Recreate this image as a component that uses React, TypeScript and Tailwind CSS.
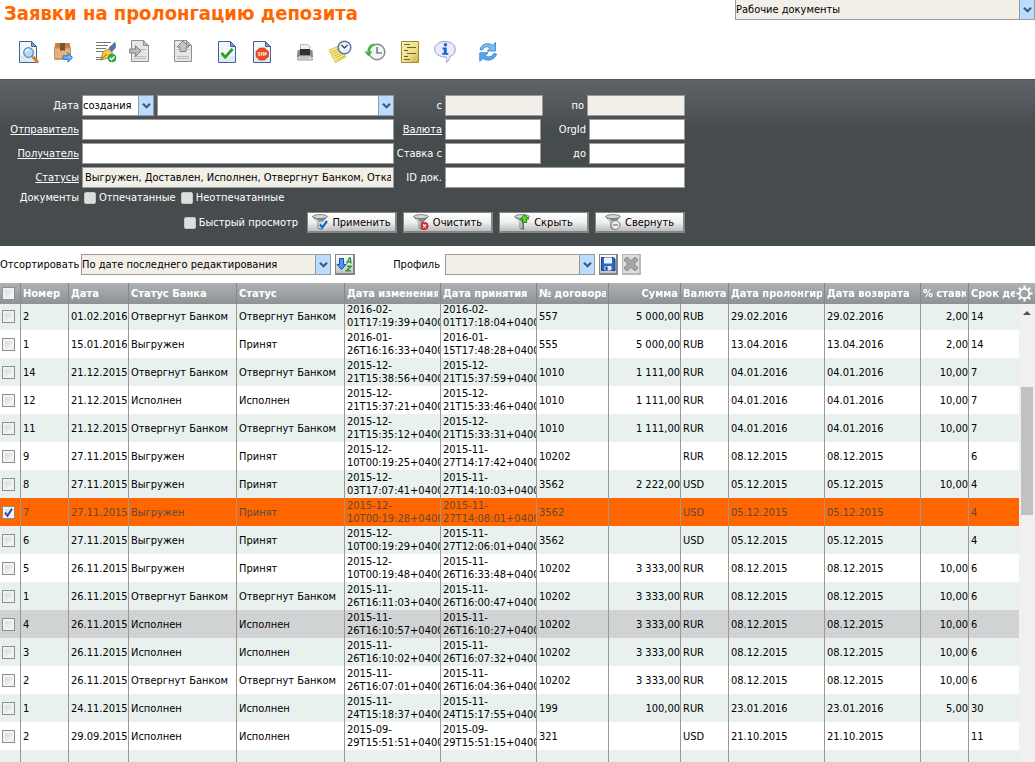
import { useLayoutEffect, useRef, type ReactNode } from "react";

type Row = {
  num: string; date: string; bank: string; status: string;
  changed: [string, string]; accepted: [string, string];
  contract: string; sum: string; cur: string;
  prolong: string; back: string; rate: string; term: string;
  state?: "selected" | "hover";
};

const R = (
  num: string, date: string, bank: string, status: string,
  c1: string, c2: string, a1: string, a2: string,
  contract: string, sum: string, cur: string,
  prolong: string, back: string, rate: string, term: string,
  state?: "selected" | "hover",
): Row => ({
  num, date, bank, status,
  changed: [c1 + "-", c2 + "+0400"], accepted: [a1 + "-", a2 + "+0400"],
  contract, sum, cur, prolong, back, rate, term, state,
});

const OB = "Отвергнут Банком";
const V = "Выгружен";
const P = "Принят";
const I = "Исполнен";

const rows: Row[] = [
  R("2", "01.02.2016", OB, OB, "2016-02", "01T17:19:39", "2016-02", "01T17:18:04", "557", "5 000,00", "RUB", "29.02.2016", "29.02.2016", "2,00", "14"),
  R("1", "15.01.2016", V, P, "2016-01", "26T16:16:33", "2016-01", "15T17:48:28", "555", "5 000,00", "RUB", "13.04.2016", "13.04.2016", "2,00", "14"),
  R("14", "21.12.2015", OB, OB, "2015-12", "21T15:38:56", "2015-12", "21T15:37:59", "1010", "1 111,00", "RUR", "04.01.2016", "04.01.2016", "10,00", "7"),
  R("12", "21.12.2015", I, I, "2015-12", "21T15:37:21", "2015-12", "21T15:33:46", "1010", "1 111,00", "RUR", "04.01.2016", "04.01.2016", "10,00", "7"),
  R("11", "21.12.2015", OB, OB, "2015-12", "21T15:35:12", "2015-12", "21T15:33:31", "1010", "1 111,00", "RUR", "04.01.2016", "04.01.2016", "10,00", "7"),
  R("9", "27.11.2015", V, P, "2015-12", "10T00:19:25", "2015-11", "27T14:17:42", "10202", "", "RUR", "08.12.2015", "08.12.2015", "", "6"),
  R("8", "27.11.2015", V, P, "2015-12", "03T17:07:41", "2015-11", "27T14:10:03", "3562", "2 222,00", "USD", "05.12.2015", "05.12.2015", "10,00", "4"),
  R("7", "27.11.2015", V, P, "2015-12", "10T00:19:28", "2015-11", "27T14:08:01", "3562", "", "USD", "05.12.2015", "05.12.2015", "", "4", "selected"),
  R("6", "27.11.2015", V, P, "2015-12", "10T00:19:29", "2015-11", "27T12:06:01", "3562", "", "USD", "05.12.2015", "05.12.2015", "", "4"),
  R("5", "26.11.2015", V, P, "2015-12", "10T00:19:48", "2015-11", "26T16:33:48", "10202", "3 333,00", "RUR", "08.12.2015", "08.12.2015", "10,00", "6"),
  R("1", "26.11.2015", OB, OB, "2015-11", "26T16:11:03", "2015-11", "26T16:00:47", "10202", "3 333,00", "RUR", "08.12.2015", "08.12.2015", "10,00", "6"),
  R("4", "26.11.2015", I, I, "2015-11", "26T16:10:57", "2015-11", "26T16:10:27", "10202", "3 333,00", "RUR", "08.12.2015", "08.12.2015", "10,00", "6", "hover"),
  R("3", "26.11.2015", I, I, "2015-11", "26T16:10:02", "2015-11", "26T16:07:32", "10202", "3 333,00", "RUR", "08.12.2015", "08.12.2015", "10,00", "6"),
  R("2", "26.11.2015", OB, OB, "2015-11", "26T16:07:01", "2015-11", "26T16:04:36", "10202", "3 333,00", "RUR", "08.12.2015", "08.12.2015", "10,00", "6"),
  R("1", "24.11.2015", I, I, "2015-11", "24T15:18:37", "2015-11", "24T15:17:55", "199", "100,00", "RUR", "23.01.2016", "23.01.2016", "5,00", "30"),
  R("2", "29.09.2015", I, I, "2015-09", "29T15:51:51", "2015-09", "29T15:51:15", "321", "", "USD", "21.10.2015", "21.10.2015", "", "11"),
];

const columns: { title: string; width: string; right?: boolean }[] = [
  { title: "Номер", width: "w-[48px]" },
  { title: "Дата", width: "w-[60px]" },
  { title: "Статус Банка", width: "w-[108px]" },
  { title: "Статус", width: "w-[108px]" },
  { title: "Дата изменения", width: "w-[96px]" },
  { title: "Дата принятия", width: "w-[96px]" },
  { title: "№ договора", width: "w-[72px]" },
  { title: "Сумма", width: "w-[72px]", right: true },
  { title: "Валюта", width: "w-[48px]" },
  { title: "Дата пролонгирования", width: "w-[96px]" },
  { title: "Дата возврата", width: "w-[96px]" },
  { title: "% ставка", width: "w-[48px]" },
  { title: "Срок депозита", width: "" },
];

/* ---------- toolbar icons ---------- */

const Svg = ({ children }: { children: ReactNode }) => (
  <svg width="24" height="24" viewBox="0 0 24 24" fill="none" aria-hidden="true">{children}</svg>
);

const Sheet = () => (
  <>
    <path d="M3.5 1.5h12l5 5v16h-17z" fill="#f1f6fc" stroke="#44618f" />
    <path d="M4.500 16h15.500v6H4.500z" fill="#dbe8f6" />
    <path d="M15.500 1.500v5h5z" fill="#7f9fd0" stroke="#44618f" />
  </>
);
const GraySheet = ({ x = 0 }: { x?: number }) => (
  <g transform={`translate(${x} 0)`}>
    <path d="M3.500.500h12l5 5v16h-17z" fill="#e6e6e6" stroke="#8f8f8f" />
    <path d="M15.500.500v5h5z" fill="#bdbdbd" stroke="#8f8f8f" />
    <path d="M6 9.500h12M6 16.500h12M6 18.500h12" stroke="#bbb" />
  </g>
);

const ViewIcon = () => (
  <Svg>
    <Sheet />
    <path d="m17 17 4.300 4.500" stroke="#e07a2c" strokeWidth="3.200" strokeLinecap="round" />
    <path d="m15.500 15.500 2 2" stroke="#9aa" strokeWidth="2" />
    <circle cx="12.500" cy="12.500" r="4.800" fill="#a9e0fb" stroke="#6e86a8" strokeWidth="1.300" />
    <path d="M9.800 12a3 3 0 0 1 3-2.500" stroke="#fff" strokeWidth="1.300" />
  </Svg>
);
const BoxIcon = () => (
  <Svg>
    <path d="M4.500 3h14l1 5v12h-16V8z" fill="#d9a066" />
    <path d="M4.500 3h14l1 5h-16z" fill="#c08347" />
    <path d="M3.500 8h16v10.500h-16z" fill="#e2b17d" stroke="#c59262" />
    <path d="M9 3h5v8l-1.500-1-1 1-1-1-1.500 1z" fill="#7d5230" />
    <path d="M12 15.800h5v-3l4.500 4.700-4.500 4.700v-3h-5z" fill="#6db6f2" stroke="#2d73bd" />
  </Svg>
);
const SignIcon = () => (
  <Svg>
    <path d="M2 2.500h15M2 5.500h12M2 8.500h10M2 11.500h7M2 17.500h5M2 19.500h5" stroke="#777" />
    <path d="M15 8 21 2.500l.500 5-4 4.500z" fill="#4e74bd" stroke="#2f4f90" strokeWidth=".7" />
    <path d="m14 9 4.500 3.500-2.500 5L6.500 20 9 12z" fill="#f1cf52" stroke="#a67d1e" strokeWidth=".9" />
    <path d="m7 19.500 6-5.500" stroke="#7a5a12" strokeWidth=".9" />
    <circle cx="18" cy="18" r="4" fill="#38ad45" stroke="#1e8a34" strokeWidth=".6" />
    <path d="m15.800 18 1.700 1.700 3-3.200" stroke="#fff" strokeWidth="1.400" />
  </Svg>
);
const ImportIcon = () => (
  <Svg>
    <GraySheet x={-1} />
    <path d="M.6 9h5.900V5.500l5.500 5.500-5.500 5.500V13H.6z" fill="#b9b9b9" stroke="#808080" />
  </Svg>
);
const ExportIcon = () => (
  <Svg>
    <GraySheet x={-1} />
    <path d="M8 11.500V7H5l6-6 6 6h-3v4.500z" fill="#c4c4c4" stroke="#808080" />
  </Svg>
);
const CheckDocIcon = () => (
  <Svg>
    <Sheet />
    <path d="m6.500 13 3.700 4.200L17.500 9" stroke="#2f9e1f" strokeWidth="2.700" />
  </Svg>
);
const StopDocIcon = () => (
  <Svg>
    <Sheet />
    <path d="M9.500 8h5l4 3.600v5L14.500 20h-5L6 16.600v-5z" fill="#ec4a20" stroke="#c93a16" strokeWidth=".7" />
    <path d="M8.300 12.700h1.600M8.300 12.700v1.400h1.600v1.500H8.300M10.500 12.700h1.800M11.400 12.700v3M13 12.700h1v2.600h-1zM15 15.700v-3h1.300v1.500H15" stroke="#fff" strokeWidth=".8" />
  </Svg>
);
const PrinterIcon = () => (
  <Svg>
    <path d="M7.500 4.500h7l2.500 2V12h-9.500z" fill="#e6f3f1" stroke="#9ab3b2" strokeWidth=".8" />
    <path d="M4.500 10h15l.500 7H4z" fill="#858a90" />
    <path d="M7 9h10v6H7z" fill="#2d3035" />
    <path d="M5.500 16h13l1 4h-15z" fill="#e4e4e4" stroke="#82878b" strokeWidth=".8" />
    <path d="M7 18h10" stroke="#a5a9ab" />
  </Svg>
);
const ScheduleIcon = () => (
  <Svg>
    <path d="m1 10 10-4 7 11-10.500 5.500z" fill="#faeb8b" stroke="#d3ae2e" strokeWidth=".8" />
    <path d="m3.500 12 7-3M4.700 14l9-4M6 16l9-4M7 18l8.500-4M8.500 20l8-4" stroke="#c3a432" strokeWidth=".8" />
    <circle cx="16.500" cy="7.500" r="6.300" fill="#eaf3fc" stroke="#60789f" strokeWidth="1.500" />
    <path d="m13.500 5 3 3 3-3" stroke="#334" strokeWidth="1.200" />
  </Svg>
);
const HistoryIcon = () => (
  <Svg>
    <circle cx="14" cy="12" r="7.800" fill="#f1f5f2" stroke="#7d8c86" strokeWidth="1.400" />
    <path d="M14 7v6h5" stroke="#555" strokeWidth="1.200" />
    <path d="M11 4.500c-3 .6-5.500 3-5.500 7" stroke="#41b541" strokeWidth="2.200" />
    <path d="M1.500 11.500h8l-4 5z" fill="#41b541" />
  </Svg>
);
const NotesIcon = () => (
  <Svg>
    <defs>
      <linearGradient id="notes" x1="0" y1="0" x2="1" y2="1">
        <stop stopColor="#fbf3b4" /><stop offset=".6" stopColor="#efdc86" /><stop offset="1" stopColor="#c3b04c" />
      </linearGradient>
    </defs>
    <path d="M3.500 1.500h17v21h-17z" fill="url(#notes)" stroke="#a08c30" />
    <path d="M6 4.500h6M9 7.500h9M6 10.500h4M9 13.500h9M6 16.500h4M6 19.500h6" stroke="#6b6430" strokeWidth="1.200" />
  </Svg>
);
const InfoIcon = () => (
  <Svg>
    <path d="M12 1.500c6 0 10.300 3.300 10.300 7.800 0 4-2.500 6.300-5.500 7.200-.2 2.500-1 4.500-3.300 6 .5-2 .2-4-.5-5.500C6 17 1.600 14 1.600 9.300 1.600 4.800 6 1.500 12 1.500z" fill="#e9ebfa" stroke="#9a9fc8" />
    <circle cx="12.500" cy="4.800" r="1.700" fill="#1661cc" />
    <path d="M9.500 7.500h4.200V13h1.500v1.800H9.300V13h1.500V9.200H9.500z" fill="#1661cc" />
  </Svg>
);
const RefreshIcon = () => (
  <Svg>
    <path d="M4 9.500C5.500 4 12 2 16.500 5.300L19.500 2.500v8.500h-8.200l2.700-3C11 6 8 6.500 6.500 10z" fill="#7cbcf4" stroke="#3a86cf" strokeWidth=".9" />
    <path d="M20.500 14C19 19.500 12 22 7 18.500l-3.200 2.800v-8.500H12l-2.700 3c3 2 7 1.200 8.200-2.300z" fill="#5aa6ec" stroke="#3a86cf" strokeWidth=".9" />
  </Svg>
);

const toolbar: { label: string; icon: ReactNode }[][] = [
  [{ label: "Просмотр", icon: <ViewIcon /> }, { label: "Отправить", icon: <BoxIcon /> }],
  [{ label: "Подписать", icon: <SignIcon /> }, { label: "Импорт", icon: <ImportIcon /> }],
  [{ label: "Экспорт", icon: <ExportIcon /> }],
  [{ label: "Принять", icon: <CheckDocIcon /> }, { label: "Отказать", icon: <StopDocIcon /> }],
  [
    { label: "Печать", icon: <PrinterIcon /> },
    { label: "Расписание", icon: <ScheduleIcon /> },
    { label: "История", icon: <HistoryIcon /> },
    { label: "Заметки", icon: <NotesIcon /> },
    { label: "Информация", icon: <InfoIcon /> },
  ],
  [{ label: "Обновить", icon: <RefreshIcon /> }],
];

/* ---------- filter button icons ---------- */

const Funnel = ({ children }: { children?: ReactNode }) => (
  <svg width="16" height="16" viewBox="0 0 16 16" fill="none" aria-hidden="true">
    <path d="M.8 2.500 6 8.500V14l3.500 1.500v-7L15 2.500z" fill="#8c8f92" stroke="#5c5f62" strokeWidth=".8" />
    <path d="M3 4.500 7 8.700V14" stroke="#dcdcdc" strokeWidth="1.200" />
    <ellipse cx="8" cy="2.600" rx="7.200" ry="2" fill="#d5d7d8" stroke="#66696c" strokeWidth=".8" />
    {children}
  </svg>
);
const FunnelApply = () => (
  <Funnel><path d="M7.500 7.500h7v7h-7z" fill="#dbe8fa" opacity=".8" /><path d="m8 10.500 2.500 3L15 7" stroke="#1e62c8" strokeWidth="2.200" /></Funnel>
);
const FunnelClear = () => (
  <Funnel><circle cx="11.500" cy="12" r="3.700" fill="#d8362f" stroke="#a51c1c" strokeWidth=".6" /><path d="m10 10.500 3 3m0-3-3 3" stroke="#fff" strokeWidth="1.200" /></Funnel>
);
const FunnelHide = () => (
  <Funnel><path d="M8.700 8.500V5H6.500l4-4.500 4.500 4.500h-2.300v3.500z" fill="#55d42a" stroke="#1d7a12" strokeWidth=".9" /></Funnel>
);
const FunnelCollapse = () => (
  <Funnel><circle cx="10.500" cy="11" r="4.500" fill="#ededed" stroke="#777" /><path d="M8 11h5" stroke="#777" strokeWidth="1.200" /></Funnel>
);

/* ---------- controls ---------- */

function Combo({ id, label, value, className, bg = "bg-white" }: {
  id: string; label?: string; value: string; className: string; bg?: string;
}) {
  return (
    <div className={`relative h-[21px] shrink-0 ${className}`}>
      <select
        id={id}
        aria-label={label}
        className={`h-full w-full appearance-none border border-[#9a9a9a] pr-4 text-black outline-none ${bg}`}
      >
        <option>{value}</option>
      </select>
      <span className="pointer-events-none absolute inset-y-px right-px flex w-[15px] items-center justify-center border-l border-[#9a9a9a] bg-[#b9dcff]">
        <svg width="9" height="6" viewBox="0 0 9 6" fill="none" aria-hidden="true">
          <path d="m1 .800 3.500 3.400L8 .800" stroke="#41597c" strokeWidth="2.200" />
        </svg>
      </span>
    </div>
  );
}

function Field({ id, value, readOnly, className }: { id: string; value?: string; readOnly?: boolean; className: string }) {
  return (
    <input
      id={id}
      type="text"
      defaultValue={value}
      readOnly={readOnly}
      className={`h-[21px] shrink-0 border border-[#9a9a9a] px-[2px] text-black outline-none ${readOnly ? "bg-[#f2eee8]" : "bg-white"} ${className}`}
    />
  );
}

function Label({ htmlFor, className, link, children }: { htmlFor: string; className: string; link?: boolean; children: string }) {
  return (
    <label htmlFor={htmlFor} className={`shrink-0 whitespace-nowrap text-right ${className}`}>
      {link ? <a href="#pick" className="underline">{children}</a> : children}
    </label>
  );
}

function Tick({ id, children }: { id: string; children: string }) {
  return (
    <label htmlFor={id} className="flex items-center gap-[3px] whitespace-nowrap">
      <input id={id} type="checkbox" className="size-[12px] appearance-none rounded-[2px] border border-[#c4c4c4] bg-[#dedede]" />
      {children}
    </label>
  );
}

function ActionButton({ icon, children }: { icon: ReactNode; children: string }) {
  return (
    <button
      type="button"
      className="flex h-[21px] w-[90px] items-center justify-center gap-[4px] border border-r-2 border-b-2 border-[#858585] bg-linear-to-b from-white via-[#f0f0f0] to-[#bdbdbd] text-black"
    >
      {icon}
      {children}
    </button>
  );
}

function GridCheck({ label, checked }: { label: string; checked?: boolean }) {
  return (
    <span className="relative flex size-[13px]">
      <input
        type="checkbox"
        aria-label={label}
        defaultChecked={checked}
        className="peer size-[13px] appearance-none border border-[#8e8f8f] bg-linear-to-br from-[#cfd2d8] to-white outline-2 -outline-offset-3 outline-[#f2f2f2]"
      />
      <svg className="pointer-events-none absolute inset-0 hidden peer-checked:block" width="13" height="13" viewBox="0 0 13 13" fill="none" aria-hidden="true">
        <path d="m3 6.500 2.500 3.300L10 2.800" stroke="#34479a" strokeWidth="2" />
      </svg>
    </span>
  );
}

const rowBg = (r: Row, i: number) =>
  r.state === "selected" ? "bg-[#ff6600] text-[#5d4a3c]"
    : r.state === "hover" ? "bg-[#d1d2d4]"
      : i % 2 === 0 ? "bg-[#e8f1ee]" : "bg-white";

const cell = "h-7 overflow-hidden whitespace-nowrap border-r border-[#999] pl-[2px]";

export default function App() {
  const grid = useRef<HTMLDivElement>(null);
  useLayoutEffect(() => {
    if (grid.current) grid.current.scrollTop = 2;
  }, []);

  return (
    <div className="flex h-screen flex-col overflow-hidden bg-white font-['DejaVu_Sans_Condensed','Noto_Sans',sans-serif] text-[11px] leading-[13px] text-black">
      <header className="flex items-start justify-between">
        <h1 className="pt-px pl-1 text-[20px] leading-[24px] font-bold text-[#ff6600]">Заявки на пролонгацию депозита</h1>
        <Combo id="docs" label="Раздел" value="Рабочие документы" className="w-[300px] -mt-px" bg="bg-[#f2eee8]" />
      </header>

      <nav className="flex gap-[19px] pt-[15px] pb-[15px] pl-4">
        {toolbar.map((group, g) => (
          <div key={g} className="flex gap-[11px]">
            {group.map((b) => (
              <button key={b.label} type="button" aria-label={b.label}>{b.icon}</button>
            ))}
          </div>
        ))}
      </nav>

      <form className="flex flex-col gap-[3px] border-t border-[#54585b] bg-[#464b4e] bg-linear-to-b from-[#5f6468] to-[#464b4e] to-30% pt-[15px] pb-[13px] text-white">
        <div className="flex items-center">
          <Label htmlFor="dateKind" className="mr-[3px] w-[79px]">Дата</Label>
          <Combo id="dateKind" value="создания" className="w-[72px]" />
          <Combo id="period" label="Период" value="" className="ml-[3px] w-[237px]" />
          <Label htmlFor="from" className="mr-[3px] w-[48px]">с</Label>
          <Field id="from" readOnly className="w-[98px]" />
          <Label htmlFor="to" className="mr-[3px] w-[41px]">по</Label>
          <Field id="to" readOnly className="w-[98px]" />
        </div>
        <div className="flex items-center">
          <Label htmlFor="sender" link className="mr-[3px] w-[79px]">Отправитель</Label>
          <Field id="sender" className="w-[312px]" />
          <Label htmlFor="currency" link className="mr-[3px] w-[48px]">Валюта</Label>
          <Field id="currency" className="w-[96px]" />
          <Label htmlFor="org" className="mr-[3px] w-[45px]">OrgId</Label>
          <Field id="org" className="w-[96px]" />
        </div>
        <div className="flex items-center">
          <Label htmlFor="receiver" link className="mr-[3px] w-[79px]">Получатель</Label>
          <Field id="receiver" className="w-[312px]" />
          <Label htmlFor="rateFrom" className="mr-[3px] w-[48px]">Ставка с</Label>
          <Field id="rateFrom" className="w-[96px]" />
          <Label htmlFor="rateTo" className="mr-[3px] w-[45px]">до</Label>
          <Field id="rateTo" className="w-[96px]" />
        </div>
        <div className="flex items-center">
          <Label htmlFor="statuses" link className="mr-[3px] w-[79px]">Статусы</Label>
          <Field id="statuses" readOnly value="Выгружен, Доставлен, Исполнен, Отвергнут Банком, Отказан" className="w-[312px]" />
          <Label htmlFor="docId" className="mr-[3px] w-[48px]">ID док.</Label>
          <Field id="docId" className="w-[240px]" />
        </div>
        <div className="flex h-[18px] items-start">
          <span className="mr-[5px] w-[79px] text-right">Документы</span>
          <div className="flex gap-[5px]">
            <Tick id="printed">Отпечатанные</Tick>
            <Tick id="unprinted">Неотпечатанные</Tick>
          </div>
        </div>
        <div className="flex w-[685px] items-center justify-end gap-[6px]">
          <div className="mr-[3px]"><Tick id="quick">Быстрый просмотр</Tick></div>
          <ActionButton icon={<FunnelApply />}>Применить</ActionButton>
          <ActionButton icon={<FunnelClear />}>Очистить</ActionButton>
          <ActionButton icon={<FunnelHide />}>Скрыть</ActionButton>
          <ActionButton icon={<FunnelCollapse />}>Свернуть</ActionButton>
        </div>
      </form>

      <div className="flex items-center py-2">
        <label htmlFor="sort" className="w-[81px] whitespace-nowrap">Отсортировать</label>
        <Combo id="sort" value="По дате последнего редактирования" className="w-[250px]" bg="bg-[#f2eee8]" />
        <button type="button" aria-label="Порядок сортировки" className="ml-1 flex h-[21px] w-[20px] items-center justify-center border border-r-2 border-b-2 border-[#858585] bg-linear-to-b from-white to-[#c4c4c4]">
          <svg className="shrink-0" width="17" height="17" viewBox="0 0 17 17" fill="none" aria-hidden="true">
            <path d="M3.500 2.500h4v6H10l-4.500 5-4.500-5h2.500z" fill="#4a97ee" stroke="#1b55ae" />
            <path d="m10.500 7.500 3-5.500h.8l.7 5.500M12 5.800h2.800" stroke="#2a9b35" strokeWidth="1.400" />
            <path d="M11 10.200h4l-4.500 4.600h4.500" stroke="#2a9b35" strokeWidth="1.600" />
          </svg>
        </button>
        <label htmlFor="profile" className="w-[90px] pr-[5px] text-right">Профиль</label>
        <Combo id="profile" value="" className="w-[150px]" bg="bg-[#f2eee8]" />
        <button type="button" aria-label="Сохранить" className="ml-1 flex h-[21px] w-[19px] items-center justify-center border border-r-2 border-b-2 border-[#858585] bg-linear-to-b from-white to-[#c4c4c4]">
          <svg className="shrink-0" width="16" height="16" viewBox="0 0 16 16" fill="none" aria-hidden="true">
            <path d="M1.500 1.500h12l1.500 1.500v11.500H1.500z" fill="#2a66c4" stroke="#17428e" />
            <path d="M4 1.500h8v6H4z" fill="#eef5fd" />
            <path d="M4.500 10h7v4.500h-7z" fill="#dfe8f3" />
            <path d="M5.500 10.500h2v4h-2z" fill="#17428e" />
          </svg>
        </button>
        <button type="button" aria-label="Удалить" className="ml-1 flex h-[21px] w-[19px] items-center justify-center border border-r-2 border-b-2 border-[#b9b9b9] bg-[#dcdcdc]">
          <svg className="shrink-0" width="16" height="16" viewBox="0 0 16 16" fill="none" aria-hidden="true">
            <path d="m4 1 4 3.800L12 1l3 3-3.800 4L15 12l-3 3-4-3.800L4 15l-3-3 3.800-4L1 4z" fill="#a6a6a6" stroke="#858585" />
          </svg>
        </button>
      </div>

      <div className="flex min-h-0 flex-1">
        <div ref={grid} className="min-w-0 flex-1 overflow-hidden">
          <table className="w-full table-fixed border-separate border-spacing-0">
            <thead className="sticky top-0 z-10 text-white">
              <tr className="bg-linear-to-b from-[#aeb2b5] to-[#8d9295]">
                <th className="h-[21px] w-[21px] border-r border-[#84898c] pl-[2px]">
                  <GridCheck label="Выбрать все" />
                </th>
                {columns.map((c, i) => (
                  <th key={c.title} className={`h-[21px] border-[#84898c] pl-[2px] ${i < columns.length - 1 ? "border-r pr-[2px]" : "pr-1"} ${c.width}`}>
                    <div className={`overflow-hidden whitespace-nowrap ${c.right ? "text-right" : "text-left"}`}>{c.title}</div>
                  </th>
                ))}
              </tr>
            </thead>
            <tbody>
              {rows.map((r, i) => (
                <tr key={i} className={rowBg(r, i)}>
                  <td className={cell}><GridCheck label={`Заявка ${r.num} от ${r.date}`} checked={r.state === "selected"} /></td>
                  <td className={cell}>{r.num}</td>
                  <td className={cell}>{r.date}</td>
                  <td className={cell}>{r.bank}</td>
                  <td className={cell}>{r.status}</td>
                  <td className={cell}>{r.changed[0]}<br />{r.changed[1]}</td>
                  <td className={cell}>{r.accepted[0]}<br />{r.accepted[1]}</td>
                  <td className={cell}>{r.contract}</td>
                  <td className={`${cell} text-right`}>{r.sum}</td>
                  <td className={cell}>{r.cur}</td>
                  <td className={cell}>{r.prolong}</td>
                  <td className={cell}>{r.back}</td>
                  <td className={`${cell} text-right`}>{r.rate}</td>
                  <td className="pl-[2px]">{r.term}</td>
                </tr>
              ))}
              <tr className="bg-[#e8f1ee]">
                {Array.from({ length: 13 }, (_, i) => <td key={i} className={cell} />)}
                <td />
              </tr>
            </tbody>
          </table>
        </div>
        <div className="flex w-4 shrink-0 flex-col bg-[#f0f0f0]">
          <button type="button" aria-label="Настройка колонок" className="relative z-20 flex h-[21px] w-full items-center justify-end bg-linear-to-b from-[#aeb2b5] to-[#8d9295]">
            <svg className="mr-[2px] shrink-0" width="17" height="17" viewBox="0 0 18 18" fill="none" stroke="#fff" aria-hidden="true">
              <circle cx="9" cy="9" r="5" strokeWidth="1.800" />
              <path d="M9 .500v3.200M9 14.300v3.200M.500 9h3.200M14.300 9h3.200M3 3l2.200 2.200M12.800 12.800 15 15M3 15l2.200-2.200M12.800 5.200 15 3" strokeWidth="2.200" />
            </svg>
          </button>
          <div className="flex h-[17px] items-center justify-center">
            <svg width="8" height="4" viewBox="0 0 8 4" aria-hidden="true"><path d="M4 0l4 4H0z" fill="#505050" /></svg>
          </div>
          <div className="mx-[2px] mt-[66px] h-[128px] bg-[#c1c1c1]" />
        </div>
      </div>
    </div>
  );
}
